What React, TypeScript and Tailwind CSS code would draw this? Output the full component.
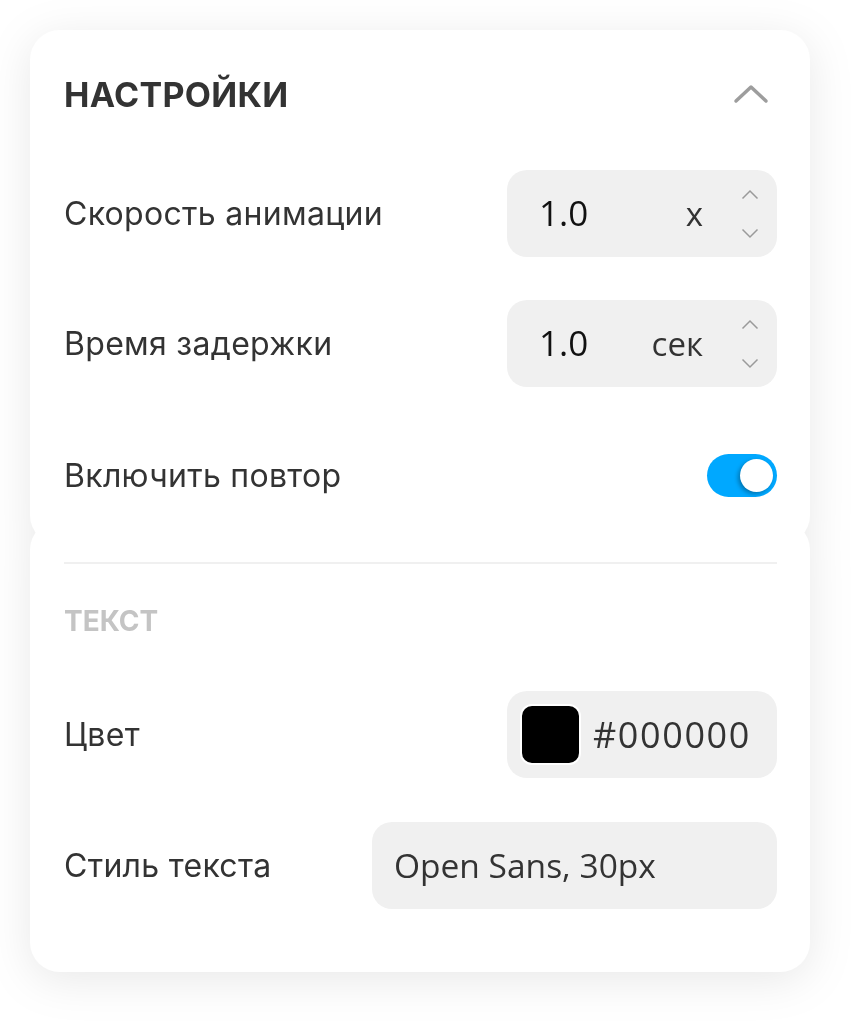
import { useState } from 'react'

const Spinner = () => (
  <div className="flex flex-col items-center gap-[28px] text-[#9a9a9a]">
    <svg width="18" height="11" viewBox="0 0 18 11" fill="none">
      <path d="M1.5 9.5 L9 2 L16.5 9.5" stroke="currentColor" strokeWidth="1.5" />
    </svg>
    <svg width="18" height="11" viewBox="0 0 18 11" fill="none">
      <path d="M1.5 1.5 L9 9 L16.5 1.5" stroke="currentColor" strokeWidth="1.5" />
    </svg>
  </div>
)

const NumberField = ({ value, unit }: { value: string; unit: string }) => (
  <div className="flex h-[87px] w-[270px] items-center rounded-[20px] bg-[#f0f0f0] pl-[32px] pr-[18px] font-['Open_Sans',sans-serif]">
    <span className="text-[35px] text-[#111]">{value}</span>
    <span className="ml-auto mr-[38px] text-[33px] text-[#333]">{unit}</span>
    <Spinner />
  </div>
)

const Row = ({ label, children, className = '' }: { label: string; children: React.ReactNode; className?: string }) => (
  <div className={`flex h-[87px] items-center justify-between ${className}`}>
    <span className="text-[32px] tracking-[0.3px] text-[#333]">{label}</span>
    {children}
  </div>
)

export default function App() {
  const [repeat, setRepeat] = useState(true)

  return (
    <div className="min-h-screen bg-white p-[30px] font-['Inter',sans-serif]">
      <div className="w-[780px] drop-shadow-[0_8px_22px_rgba(0,0,0,0.09)]">
        <div className="h-[515px] rounded-[30px] bg-white pl-[34px] pr-[33px] pt-[34px]">
          <div className="flex h-[60px] items-center justify-between">
            <h2 className="text-[34px] font-bold tracking-[0.3px] text-[#333]">НАСТРОЙКИ</h2>
            <svg width="36" height="22" viewBox="0 0 36 22" fill="none" className="mr-[8px]">
              <path d="M3 18 L18 4 L33 18" stroke="#9d9d9d" strokeWidth="3.5" strokeLinecap="round" strokeLinejoin="round" />
            </svg>
          </div>

          <Row label="Скорость анимации" className="mt-[46px]">
            <NumberField value="1.0" unit="x" />
          </Row>
          <Row label="Время задержки" className="mt-[43px]">
            <NumberField value="1.0" unit="сек" />
          </Row>
          <Row label="Включить повтор" className="mt-[45px]">
            <button
              onClick={() => setRepeat(!repeat)}
              className={`flex h-[43px] w-[70px] items-center rounded-full px-[4px] ${repeat ? 'justify-end bg-[#00a8ff]' : 'justify-start bg-[#d0d0d0]'}`}
            >
              <span className="h-[33px] w-[33px] rounded-full bg-white shadow-[-2px_2px_4px_rgba(0,0,0,0.3)]" />
            </button>
          </Row>
        </div>

        <div className="-mt-[25px] h-[452px] rounded-[30px] bg-white pl-[34px] pr-[33px] pt-[42px]">
          <div className="h-[2px] bg-[#f0f0f0]" />
          <div className="mt-[36px] text-[28px] font-bold text-[#c4c4c4]">ТЕКСТ</div>

          <Row label="Цвет" className="mt-[49px]">
            <div className="flex h-[87px] w-[270px] items-center rounded-[20px] bg-[#f0f0f0] pl-[13px]">
              <span className="h-[61px] w-[61px] rounded-[12px] border-2 border-white bg-black" />
              <span className="ml-[12px] font-['Open_Sans',sans-serif] text-[36px] tracking-[1.6px] text-[#333]">#000000</span>
            </div>
          </Row>
          <Row label="Стиль текста" className="mt-[44px]">
            <div className="flex h-[87px] w-[405px] items-center rounded-[20px] bg-[#f0f0f0] pl-[22px]">
              <span className="font-['Open_Sans',sans-serif] text-[33.5px] text-[#333]">Open Sans, 30px</span>
            </div>
          </Row>
        </div>
      </div>
    </div>
  )
}
